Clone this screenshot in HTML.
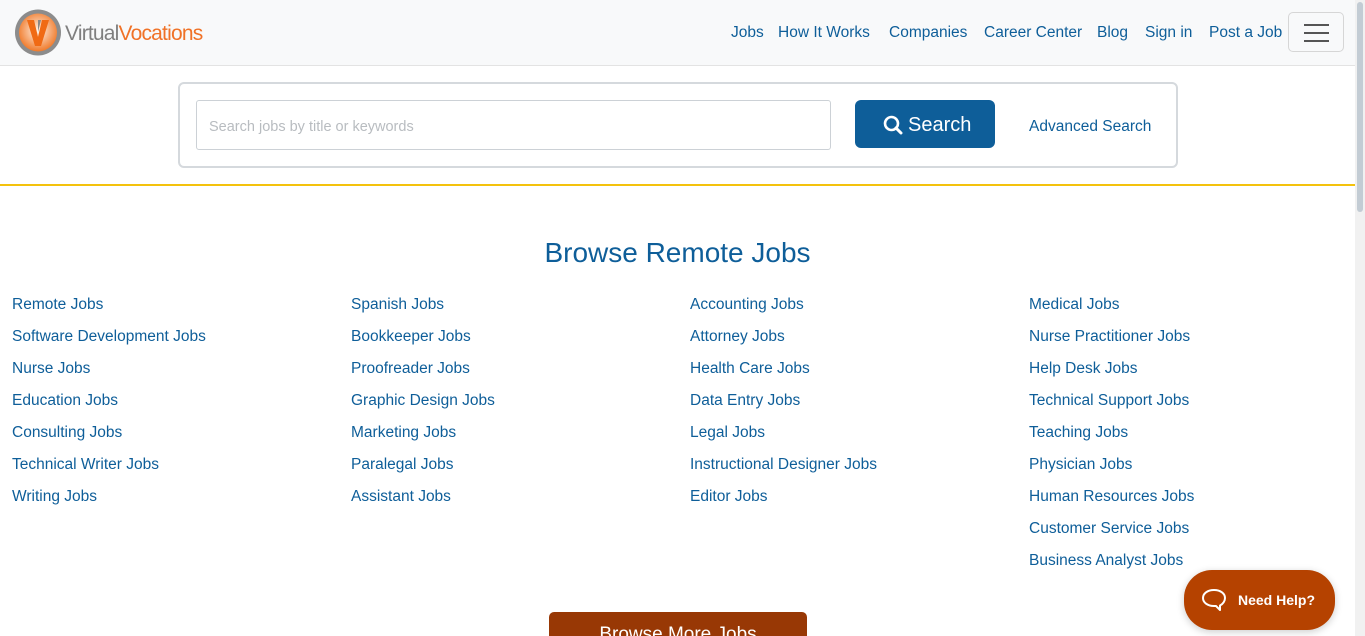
<!DOCTYPE html>
<html style="width:1365px;height:636px;overflow:hidden"><head><style>
*{margin:0;padding:0;box-sizing:border-box}
body{width:1365px;height:636px;overflow:hidden;background:#fff;font-family:"Liberation Sans",sans-serif;position:relative}
a{color:#0e5e99;text-decoration:none}
.nav{position:absolute;left:0;top:0;width:1355px;height:66px;background:#f8f9fa;border-bottom:1px solid #e3e3e3}
.logo{position:absolute;left:13px;top:8px}
.brand{position:absolute;left:65px;top:22px;font-size:21px;letter-spacing:-0.8px}
.links{position:absolute;top:24px;font-size:15.5px}
.links a{position:absolute;white-space:nowrap}
.tog{position:absolute;left:1288px;top:12px;width:56px;height:40px;border:1px solid #d6d6d6;border-radius:5px}
.tog i{position:absolute;left:15px;width:25px;height:2px;background:#555}
.box{position:absolute;left:178px;top:82px;width:1000px;height:86px;border:2px solid #d5d9dd;border-radius:6px}
.inp{position:absolute;left:196px;top:100px;width:635px;height:50px;border:1px solid #ccd1d6;border-radius:3px;font-size:14.5px;color:#b8bcc0;padding:18px 12px}
.btn{position:absolute;left:855px;top:100px;width:140px;height:48px;background:#0e5e99;border-radius:6px;color:#fff;font-size:20px}
.adv{position:absolute;left:1029px;top:118px;font-size:15.5px}
.yl{position:absolute;left:0;top:184px;width:1355px;height:2px;background:#f4c20d}
.sb{position:absolute;left:1355px;top:0;width:10px;height:636px;background:#f1f1f1}
.sb i{position:absolute;left:2px;top:2px;width:6px;height:210px;background:#c3ccd4;border-radius:3px}
h2{position:absolute;left:0;width:1355px;top:237px;text-align:center;font-weight:normal;font-size:28px;color:#0e5e99}
.col{position:absolute;top:289px;font-size:15.5px;line-height:32px}
.col a{display:block;white-space:nowrap}
.more{position:absolute;left:549px;top:612px;width:258px;height:40px;background:#983805;border-radius:5px;color:#fff;font-size:19px;text-align:center;padding-top:12px}
.help{position:absolute;left:1184px;top:570px;width:151px;height:60px;background:#b54200;border-radius:28px;color:#fff;font-weight:bold;font-size:14px;box-shadow:0 2px 8px rgba(0,0,0,.2)}
</style></head><body>
<div class="nav">
<svg class="logo" width="50" height="50" viewBox="0 0 50 50"><defs><radialGradient id="g" cx="50%" cy="45%" r="55%"><stop offset="0" stop-color="#fff4ea"/><stop offset="1" stop-color="#f07a2a"/></radialGradient></defs><circle cx="25" cy="24.5" r="23" fill="#8c8c8c"/><circle cx="25" cy="24.5" r="19" fill="url(#g)"/><path d="M14 12h7l4 17 4-17h7l-8 26h-6z" fill="#f06a14"/><path d="M25 12h3l-3 12z" fill="#888"/></svg>
<div class="brand"><span style="color:#7f7f7f">Virtual</span><span style="color:#f07227">Vocations</span></div>
<div class="links"><a style="left:731px">Jobs</a><a style="left:778px">How It Works</a><a style="left:889px">Companies</a><a style="left:984px">Career Center</a><a style="left:1097px">Blog</a><a style="left:1145px">Sign in</a><a style="left:1209px">Post a Job</a></div>
<div class="tog"><i style="top:11px"></i><i style="top:19px"></i><i style="top:27px"></i></div>
</div>
<div class="box"></div>
<div class="inp">Search jobs by title or keywords</div>
<div class="btn"><svg style="position:absolute;left:28px;top:15px" width="20" height="20" viewBox="0 0 20 20"><circle cx="8.5" cy="8.5" r="6.5" fill="none" stroke="#fff" stroke-width="2.6"/><path d="M13 13l5 5" stroke="#fff" stroke-width="3" stroke-linecap="round"/></svg><span style="position:absolute;left:53px;top:14px">Search</span></div>
<a class="adv">Advanced Search</a>
<div class="yl"></div>
<h2>Browse Remote Jobs</h2>
<div class="col" style="left:12px"><a>Remote Jobs</a><a>Software Development Jobs</a><a>Nurse Jobs</a><a>Education Jobs</a><a>Consulting Jobs</a><a>Technical Writer Jobs</a><a>Writing Jobs</a></div>
<div class="col" style="left:351px"><a>Spanish Jobs</a><a>Bookkeeper Jobs</a><a>Proofreader Jobs</a><a>Graphic Design Jobs</a><a>Marketing Jobs</a><a>Paralegal Jobs</a><a>Assistant Jobs</a></div>
<div class="col" style="left:690px"><a>Accounting Jobs</a><a>Attorney Jobs</a><a>Health Care Jobs</a><a>Data Entry Jobs</a><a>Legal Jobs</a><a>Instructional Designer Jobs</a><a>Editor Jobs</a></div>
<div class="col" style="left:1029px"><a>Medical Jobs</a><a>Nurse Practitioner Jobs</a><a>Help Desk Jobs</a><a>Technical Support Jobs</a><a>Teaching Jobs</a><a>Physician Jobs</a><a>Human Resources Jobs</a><a>Customer Service Jobs</a><a>Business Analyst Jobs</a></div>
<div class="more">Browse More Jobs</div>
<div class="help"><svg style="position:absolute;left:16px;top:17px" width="28" height="28" viewBox="0 0 28 28"><path d="M14 3C7.5 3 3 6.5 3 11s4.5 8 11 8h2l4 4v-4.5c3-1.5 5-4.5 5-7.5 0-4.5-4.5-8-11-8z" fill="none" stroke="#fff" stroke-width="2" stroke-linejoin="round"/></svg><span style="position:absolute;left:54px;top:22px">Need Help?</span></div>
<div class="sb"><i></i></div>
</body></html>
